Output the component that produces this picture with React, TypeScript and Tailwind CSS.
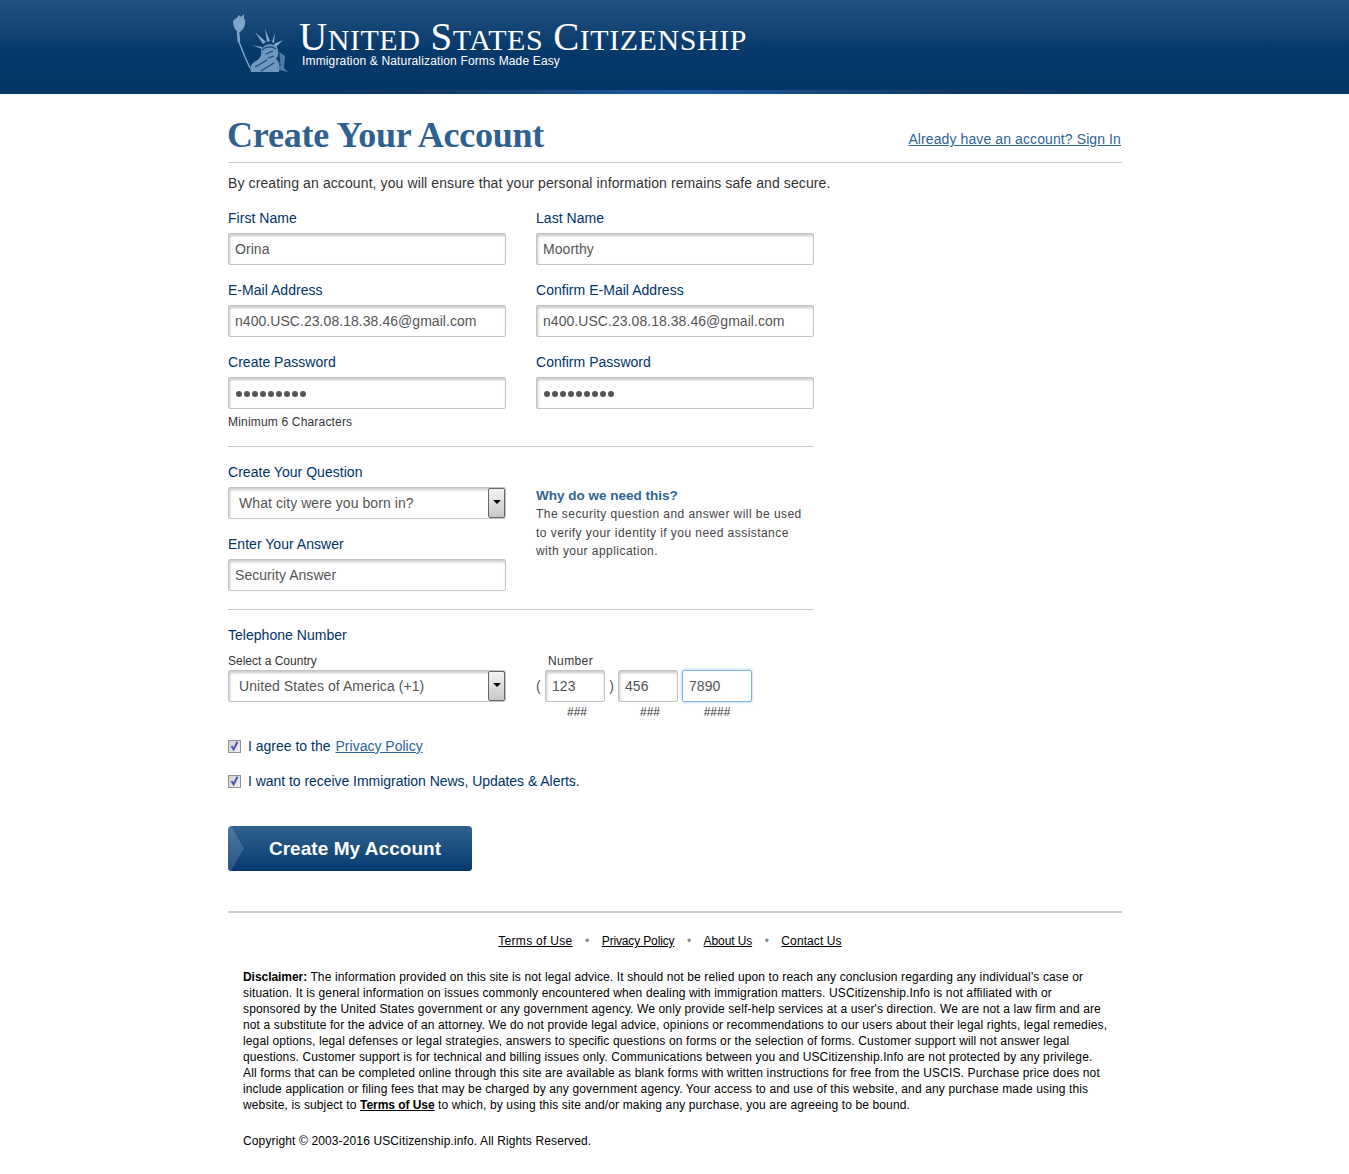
import { ReactNode } from "react";

const FONT = "font-['Liberation_Sans',Arial,sans-serif]";
const SERIF = "font-['Liberation_Serif','Times_New_Roman',serif]";

function Label({ children }: { children: ReactNode }) {
  return <div className="h-[20px] text-[14px] leading-[20px] tracking-[0.03px] text-[#003366]">{children}</div>;
}

function Dots() {
  return (
    <span className="ml-[1px] mt-[1px] flex">
      {[0, 1, 2, 3, 4, 5, 6, 7, 8].map((i) => (
        <span key={i} className="mr-[2px] h-[6px] w-[6px] rounded-full bg-[#555555]" />
      ))}
    </span>
  );
}

function TextBox({ value, className = "w-[278px]", focus = false, pw = false }: { value: string; className?: string; focus?: boolean; pw?: boolean }) {
  return (
    <div
      className={
        "flex h-[32px] items-center rounded-[2px] border bg-white pl-[6px] text-[14px] tracking-[0.05px] text-[#555555] " +
        (focus
          ? "border-[#7fb5e6] shadow-[0_0_3px_rgba(80,150,220,0.6)] "
          : "border-[#c4c4c4] shadow-[inset_1px_2px_3px_rgba(0,0,0,0.22)] ") +
        className
      }
    >
      {pw ? <Dots /> : value}
    </div>
  );
}

function SelectBox({ value }: { value: string }) {
  return (
    <div className="flex h-[32px] w-[278px] items-center justify-between rounded-[2px] border border-[#c4c4c4] bg-white pl-[10px] text-[14px] tracking-[0.07px] text-[#555555] shadow-[inset_1px_2px_3px_rgba(0,0,0,0.22)]">
      {value}
      <div className="flex h-[30px] w-[17px] items-center justify-center rounded-[2px] border border-[#666666] bg-gradient-to-b from-[#f4f4f4] to-[#c8c8c8]">
        <div className="mb-[3px] h-0 w-0 border-x-[4px] border-t-[4px] border-x-transparent border-t-black" />
      </div>
    </div>
  );
}

function Check({ children }: { children: ReactNode }) {
  return (
    <div className="flex h-[20px] items-center text-[14px] text-[#003366]">
      <div className="mr-[7px] flex h-[13px] w-[13px] items-center justify-center border border-[#8e8f8f] bg-gradient-to-br from-[#d4d4d4] to-[#f0f0f0]">
        <svg width="9" height="10" viewBox="0 0 9 10">
          <path d="M1.5 5 L3.6 8.4 L7.5 0.8" fill="none" stroke="#4a5aa8" strokeWidth="2" />
        </svg>
      </div>
      {children}
    </div>
  );
}

function Liberty() {
  return (
    <svg width="64" height="62" viewBox="0 0 64 62" className="shrink-0" fill="none">
      {/* flame and torch */}
      <path d="M4 5 L7 1 L9 3 L12 0 L12 6Z" fill="#7fa3c7" />
      <path d="M1 7 C4 3 11 3 13 6 C14 11 11 16 8 18 L6 18 C3 16 1 12 1 7Z" fill="#7fa3c7" />
      {/* raised arm */}
      <path d="M6 18 L7 28" stroke="#7fa3c7" strokeWidth="2.6" />
      <path d="M7 28 L13 43 L18 54" stroke="#7fa3c7" strokeWidth="1.5" />
      {/* crown rays */}
      <g fill="#8aabcb">
        <path d="M31 30 L23 18 L34 28Z" />
        <path d="M35 28 L33 15 L38 27Z" />
        <path d="M40 28 L43 19 L42 29Z" />
        <path d="M42 30 L51 26 L44 33Z" />
        <path d="M30 33 L20 31 L30 35Z" />
      </g>
      {/* head and drapery */}
      <path d="M29 36 C32 29 42 29 45 33 C47 37 47 41 44 45 C47 47 48 50 47 58 L19 58 C17 54 19 49 24 47 C28 45 30 41 29 36Z" fill="#6f96bd" />
      <path d="M47 38 L53 42 L52 54 L56 58 L47 56Z" fill="#4f7aa6" />
      <g stroke="#1d4876" strokeWidth="1.2">
        <path d="M30 36 C34 32 40 32 44 35" />
        <path d="M34 40 L41 37 M36 44 L42 42" />
        <path d="M23 53 L35 46 M29 57 L42 49" />
        <path d="M47 39 L48 52" />
      </g>
    </svg>
  );
}

function SmallCaps({ first, rest }: { first: string; rest: string }) {
  return (
    <span>
      <span className="text-[39px]">{first}</span>
      <span className="text-[30px]">{rest}</span>
    </span>
  );
}

export default function App() {
  return (
    <div className={"min-h-[1174px] bg-white " + FONT}>
      <header className="relative h-[94px] bg-gradient-to-b from-[#22527f] via-[#073a6c] via-[52%] to-[#033564]">
        <div className="ml-[228px] flex pl-[4px] pt-[14px]">
          <Liberty />
          <div className="ml-[3px]">
            <div className={"h-[36px] whitespace-nowrap text-[38px] leading-[46px] tracking-[0.55px] text-white " + SERIF}>
              <SmallCaps first="U" rest="NITED" /> <SmallCaps first="S" rest="TATES" /> <SmallCaps first="C" rest="ITIZENSHIP" />
            </div>
            <div className="ml-[3px] mt-[3px] text-[12px] leading-[16px] tracking-[0.15px] text-white">Immigration &amp; Naturalization Forms Made Easy</div>
          </div>
        </div>
        <div className="absolute bottom-0 left-0 h-[4px] w-full bg-[linear-gradient(to_right,transparent_18%,#0f3560_30%,#1f5aa0_50%,#0f3560_72%,transparent_88%)]" />
      </header>

      <main className="ml-[228px] w-[894px]">
        <div className="flex h-[69px] items-end justify-between border-b border-[#c8c8c8] pb-[7px]">
          <h1 className={"ml-[-1px] text-[36px] font-bold leading-[40px] tracking-[-0.22px] text-[#2f6190] " + SERIF}>Create Your Account</h1>
          <a className="mb-[6px] mr-[1px] text-[14px] leading-[20px] tracking-[0.1px] text-[#2f6496] underline">Already have an account? Sign In</a>
        </div>

        <p className="mt-[10px] text-[14px] leading-[20px] tracking-[0.1px] text-[#333333]">By creating an account, you will ensure that your personal information remains safe and secure.</p>

        <div className="w-[586px]">
          <div className="mt-[15px] grid grid-cols-[278px_278px] gap-x-[30px] gap-y-[15px]">
            <div><Label>First Name</Label><div className="h-[5px]" /><TextBox value="Orina" /></div>
            <div><Label>Last Name</Label><div className="h-[5px]" /><TextBox value="Moorthy" /></div>
            <div><Label>E-Mail Address</Label><div className="h-[5px]" /><TextBox value="n400.USC.23.08.18.38.46@gmail.com" /></div>
            <div><Label>Confirm E-Mail Address</Label><div className="h-[5px]" /><TextBox value="n400.USC.23.08.18.38.46@gmail.com" /></div>
            <div>
              <Label>Create Password</Label><div className="h-[5px]" /><TextBox value="" pw />
              <div className="mt-[5px] text-[12px] leading-[16px] tracking-[0.18px] text-[#333333]">Minimum 6 Characters</div>
            </div>
            <div><Label>Confirm Password</Label><div className="h-[5px]" /><TextBox value="" pw /></div>
          </div>

          <div className="mt-[16px] border-t border-[#c8c8c8]" />

          <div className="mt-[15px] grid grid-cols-[278px_278px] gap-x-[30px]">
            <div>
              <Label>Create Your Question</Label><div className="h-[5px]" />
              <SelectBox value="What city were you born in?" />
              <div className="h-[15px]" />
              <Label>Enter Your Answer</Label><div className="h-[5px]" />
              <TextBox value="Security Answer" />
            </div>
            <div className="w-[272px] pt-[25px]">
              <div className="text-[13.5px] font-bold leading-[18px] text-[#2f6496]">Why do we need this?</div>
              <p className="text-[12px] leading-[18.5px] tracking-[0.45px] text-[#444444]">The security question and answer will be used to verify your identity if you need assistance with your application.</p>
            </div>
          </div>

          <div className="mt-[18px] border-t border-[#c8c8c8]" />

          <div className="mt-[15px]"><Label>Telephone Number</Label></div>
          <div className="mt-[8px] flex">
            <div>
              <div className="text-[12px] leading-[16px] text-[#333333]">Select a Country</div>
              <div className="h-[1px]" />
              <SelectBox value="United States of America (+1)" />
            </div>
            <div className="ml-[30px]">
              <div className="ml-[12px] text-[12px] leading-[16px] tracking-[0.4px] text-[#333333]">Number</div>
              <div className="h-[1px]" />
              <div className="flex items-center text-[14px] text-[#555555]">
                <span className="w-[9px]">(</span>
                <TextBox value="123" className="w-[60px]" />
                <span className="w-[13px] text-center">)</span>
                <TextBox value="456" className="w-[60px]" />
                <div className="w-[4px]" />
                <TextBox value="7890" className="w-[70px]" focus />
              </div>
              <div className="mt-[2px] flex text-center text-[12px] leading-[16px] text-[#333333]">
                <span className="ml-[9px] w-[64px]">###</span>
                <span className="ml-[9px] w-[64px]">###</span>
                <span className="w-[70px]">####</span>
              </div>
            </div>
          </div>
        </div>

        <div className="mt-[16px]">
          <Check>I agree to the <a className="ml-[5px] text-[#2f6496] underline">Privacy Policy</a></Check>
          <div className="h-[15px]" />
          <Check><span className="tracking-[-0.04px]">I want to receive Immigration News, Updates &amp; Alerts.</span></Check>
        </div>

        <button className="relative mt-[35px] block h-[45px] w-[244px] overflow-hidden rounded-[4px] bg-gradient-to-b from-[#30628f] to-[#053a70] text-center text-[19px] font-bold leading-[45px] tracking-[0.05px] text-white shadow-[inset_0_-1px_0_#04305e]">
          <svg className="absolute left-0 top-0" width="17" height="45" viewBox="0 0 17 45">
            <path d="M0 0 L3 0 L16 22 L3 45 L0 45 Z" fill="#ffffff" fillOpacity="0.14" />
          </svg>
          <span className="relative left-[5px]">Create My Account</span>
        </button>

        <div className="mt-[40px] border-t-2 border-[#cfcfcf]" />

        <nav className="mt-[19px] flex justify-center pr-[10px] text-[12px] leading-[18px] text-black">
          <a className="tracking-[0.3px] underline">Terms of Use</a>
          <span className="mx-[12.5px] text-[#888888]">•</span>
          <a className="tracking-[-0.15px] underline">Privacy Policy</a>
          <span className="mx-[12.5px] text-[#888888]">•</span>
          <a className="tracking-[-0.1px] underline">About Us</a>
          <span className="mx-[12.5px] text-[#888888]">•</span>
          <a className="tracking-[0.1px] underline">Contact Us</a>
        </nav>

        <div className="ml-[15px] mt-[19px] whitespace-nowrap text-[12px] leading-[16px] tracking-[0.128px] text-black">
          <p>
            <b className="tracking-[-0.05px]">Disclaimer:</b> The information provided on this site is not legal advice. It should not be relied upon to reach any conclusion regarding any individual&apos;s case or<br />
            situation. It is general information on issues commonly encountered when dealing with immigration matters. USCitizenship.Info is not affiliated with or<br />
            sponsored by the United States government or any government agency. We only provide self-help services at a user&apos;s direction. We are not a law firm and are<br />
            not a substitute for the advice of an attorney. We do not provide legal advice, opinions or recommendations to our users about their legal rights, legal remedies,<br />
            legal options, legal defenses or legal strategies, answers to specific questions on forms or the selection of forms. Customer support will not answer legal<br />
            questions. Customer support is for technical and billing issues only. Communications between you and USCitizenship.Info are not protected by any privilege.<br />
            All forms that can be completed online through this site are available as blank forms with written instructions for free from the USCIS. Purchase price does not<br />
            include application or filing fees that may be charged by any government agency. Your access to and use of this website, and any purchase made using this<br />
            website, is subject to <b className="tracking-[-0.05px] underline">Terms of Use</b> to which, by using this site and/or making any purchase, you are agreeing to be bound.
          </p>
          <p className="mt-[20px]">Copyright © 2003-2016 USCitizenship.info. All Rights Reserved.</p>
        </div>
      </main>
    </div>
  );
}
